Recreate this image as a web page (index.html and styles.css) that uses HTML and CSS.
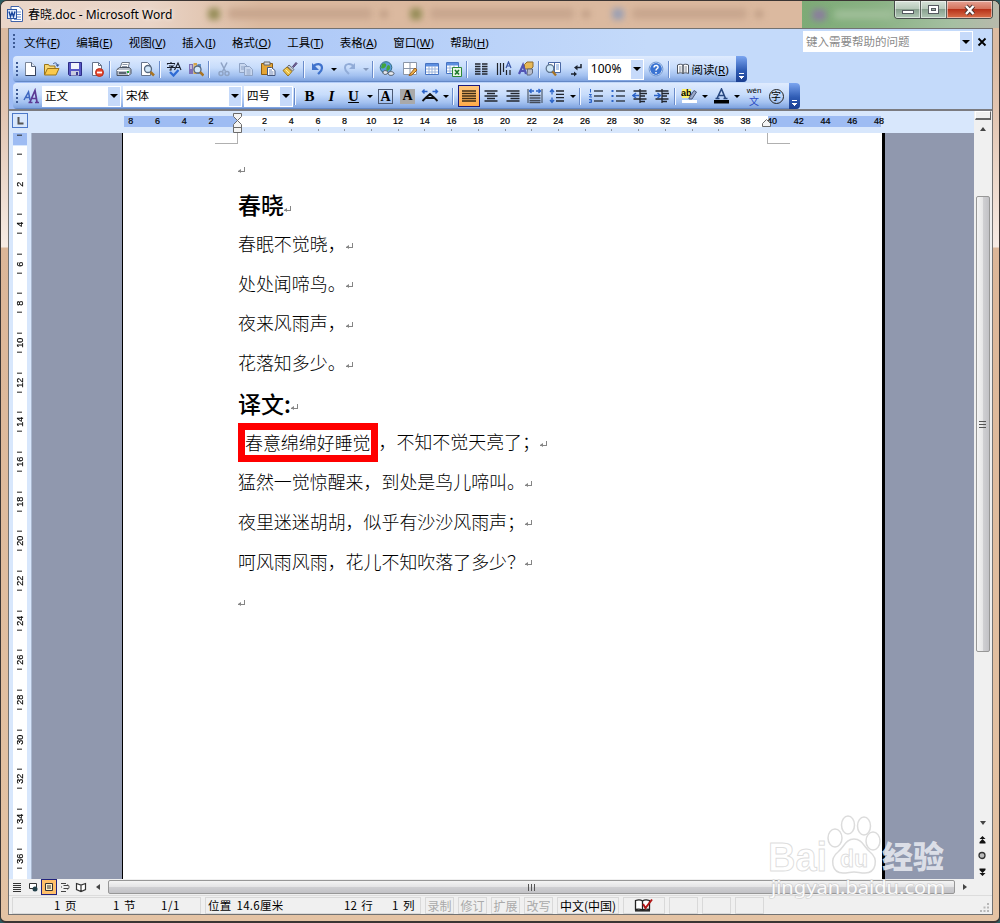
FILE: index.html
```html
<!DOCTYPE html>
<html lang="zh-CN">
<head>
    <meta charset="UTF-8">
    <title>春晓.doc - Microsoft Word</title>
    <link rel="stylesheet" href="styles.css">
</head>
<body>
<div class="window">
    <div class="titlebar">
        <svg class="app-icon" width="16" height="16" viewBox="0 0 16 16"><path d="M4 .5h8l3.500 3.500v11.500H4z" fill="#fff" stroke="#3f62a8"/><path d="M10 6h4M10 8.500h4M10 11h4M7 13.500h7" stroke="#6c8fcf"/><rect x=".5" y="3.500" width="9" height="9" fill="#dce8fb" stroke="#2d56a5"/><path d="M2 5.500l1.500 5L5 6.500l1.500 4L8 5.500" fill="none" stroke="#17449c" stroke-width="1.400"/></svg>
        <span class="caption">春晓.doc - Microsoft Word</span>
        <div class="ghosts">
            <i class="ghost g-leaf"></i><i class="ghost g-text"></i><i class="ghost g-x"></i>
            <i class="ghost g-leaf"></i><i class="ghost g-text"></i><i class="ghost g-x"></i>
            <i class="ghost g-paw"></i><i class="ghost g-text g-short"></i><i class="ghost g-x"></i>
        </div>
        <div class="ghost-green"><i class="ghost g-purple"></i><i class="ghost g-pale"></i></div>
        <div class="controls">
            <span class="ctl"><svg width="14" height="12"><rect x="1.500" y="6.500" width="11" height="3" fill="#fff" stroke="#555a60"/></svg></span>
            <span class="ctl"><svg width="14" height="12"><rect x="1.500" y="1.500" width="10" height="8" fill="#fff" stroke="#555a60"/><rect x="4.500" y="4.500" width="4" height="2" fill="#9eb3a5" stroke="#555a60"/></svg></span>
            <span class="ctl close"><svg width="14" height="12"><path d="M3 2l7.500 8M10.500 2L3 10" stroke="#4b3532" stroke-width="4.200"/><path d="M3 2l7.500 8M10.500 2L3 10" stroke="#fff" stroke-width="2.400"/></svg></span>
        </div>
    </div>

    <div class="client">
        <div class="menubar">
            <i class="grip"></i>
            <span>文件(<u>F</u>)</span><span>编辑(<u>E</u>)</span><span>视图(<u>V</u>)</span><span>插入(<u>I</u>)</span><span>格式(<u>O</u>)</span><span>工具(<u>T</u>)</span><span>表格(<u>A</u>)</span><span>窗口(<u>W</u>)</span><span>帮助(<u>H</u>)</span>
            <div class="ask"><span>键入需要帮助的问题</span><i class="drop"></i></div>
            <svg class="menu-close" width="10" height="10"><path d="M1.500 1.500l7 7M8.500 1.500l-7 7" stroke="#000" stroke-width="1.800"/></svg>
        </div>

        <!-- standard toolbar -->
        <div class="toolrow">
            <div class="toolbar">
                <i class="grip"></i>
                <b class="btn"><svg width="16" height="16"><path d="M3.500 1.500h6l4 4v9h-10z" fill="#fff" stroke="#7a8699"/><path d="M13.500 6v8.500H3.500" fill="none" stroke="#33405c"/><path d="M9.500 1.500v4h4" fill="#dfe7f3" stroke="#56637c"/></svg></b>
                <b class="btn"><svg width="16" height="16"><path d="M.5 13.500v-10h4l1 1.500h5.500v3" fill="#f7d774" stroke="#9b7418"/><path d="M.5 14l3-6.500H15l-3 6.500z" fill="#fbc94b" stroke="#9b7418"/><path d="M9 3c2-2 4-1 4.500 1" fill="none" stroke="#3c5a94"/><path d="M11.500 3.500h4L13.500 6z" fill="#3c5a94"/></svg></b>
                <b class="btn"><svg width="16" height="16"><path d="M1.500 1.500h13v13h-12l-1-1z" fill="#5757c4" stroke="#2d2d85"/><path d="M4 2h8v6H4z" fill="#f2f4fb"/><path d="M4 10h8v4.500H4z" fill="#c9cce0"/><path d="M9 11h2v3H9z" fill="#3a3a90"/></svg></b>
                <b class="btn"><svg width="16" height="16"><path d="M3.500 1.500h6l3 3v10h-9z" fill="#fff" stroke="#66738a"/><path d="M9.500 1.500v3h3" fill="none" stroke="#66738a"/><circle cx="10.500" cy="11.500" r="4" fill="#e4432b" stroke="#b7311c"/><path d="M8 11.500h5" stroke="#fff" stroke-width="1.800"/></svg></b>
                <i class="sep"></i>
                <b class="btn"><svg width="16" height="16"><path d="M4 7L6 1.500h7.500L12 7" fill="#fff" stroke="#6e7887"/><path d="M6.500 3.500h5M6 5.500h5" stroke="#8c97a8"/><path d="M1 8.500L3.500 6.500h10l1.500 2v4l-2 2H1z" fill="#b8bfca" stroke="#4a5260"/><path d="M1 9.500h11.500v4.500" fill="none" stroke="#fff"/><path d="M3 12h7" stroke="#3d4654" stroke-width="1.500"/><path d="M11 11h2" stroke="#22a83a" stroke-width="2"/></svg></b>
                <b class="btn"><svg width="16" height="16"><path d="M2.500 1.500h6l3 3v10h-9z" fill="#fff" stroke="#66738a"/><circle cx="9" cy="8" r="3.500" fill="#d3e8fa" stroke="#56677f" stroke-width="1.300"/><path d="M11.500 11l3.500 3.500" stroke="#a87424" stroke-width="2.500"/></svg></b>
                <i class="sep"></i>
                <b class="btn"><svg width="16" height="16"><path d="M1.500 3.500v-1h7v1M3 5h4L5 6.500V9H3.500M1 6.500h8M5 1v1.500M8.500 9L12 2l3 7M10 6.500h4" fill="none" stroke="#151b28" stroke-width="1.100"/><path d="M4 11l3.500 3.500L12.500 9" fill="none" stroke="#2f6bd4" stroke-width="2.300"/></svg></b>
                <b class="btn"><svg width="16" height="16"><path d="M1 3h4v10H1z" fill="#7d70b6"/><path d="M5.500 2h3.500v11H5.500z" fill="#d6a548"/><path d="M9.500 3H13v10H9.500z" fill="#608fca"/><path d="M2 5h2M6.500 5h2M2 7h2" stroke="#fff"/><circle cx="9.500" cy="8.500" r="3.500" fill="#d3e8fa" stroke="#56677f" stroke-width="1.300"/><path d="M12 11l3.500 3.500" stroke="#a87424" stroke-width="2.500"/></svg></b>
                <i class="sep"></i>
                <b class="btn"><svg width="16" height="16" fill="none" stroke="#8fa3c4" stroke-width="1.500"><path d="M5 1.500l4.500 9M11 1.500l-4.500 9"/><circle cx="5" cy="12.500" r="2"/><circle cx="11" cy="12.500" r="2"/></svg></b>
                <b class="btn"><svg width="16" height="16" fill="#c8d7ef" stroke="#8fa3c4"><path d="M1.500 2.500h5l3 3v6h-8z"/><path d="M6.500 5.500h5l3 3v6h-8z"/><path d="M8.500 9h4M8.500 11h4M8.500 13h4M3 6h3M3 8h3"/></svg></b>
                <b class="btn"><svg width="16" height="16"><path d="M1.500 2.500h11v11h-11z" fill="#e5a534" stroke="#8c5e15"/><path d="M4 1h6v3H4z" fill="#d7dbe2" stroke="#666"/><path d="M7.500 6.500h4l3.500 3v5H7.500z" fill="#fff" stroke="#44567c"/><path d="M9 9h3M9 11h4.500M9 13h4.500" stroke="#6d85b6"/></svg></b>
                <b class="btn"><svg width="16" height="16"><path d="M10.500 5.500L14 1.500l1 1-3.500 4z" fill="#7b5fa0" stroke="#4f4772"/><path d="M7 4l5 4.500-1.500 1.500L5.500 5.500z" fill="#c9ced8" stroke="#6a6f7a"/><path d="M5 6L10 10.500 6 15 1 9.500z" fill="#ecc14a" stroke="#9a7418"/><path d="M3.500 8.500l4 4" stroke="#fff2a8"/></svg></b>
                <i class="sep"></i>
                <b class="btn"><svg width="16" height="16"><path d="M3 6c3-4 9-4 9 1 0 3-2 4-4 6" fill="none" stroke="#3f72cc" stroke-width="2.200"/><path d="M2 2v7h7z" fill="#3f72cc"/></svg></b>
                <i class="arr"></i>
                <b class="btn"><svg width="16" height="16"><path d="M12 6c-3-4-9-4-9 1 0 3 2 4 4 6" fill="none" stroke="#91acd8" stroke-width="2"/><path d="M13 2v6H7z" fill="#91acd8"/></svg></b>
                <i class="arr dim"></i>
                <i class="sep"></i>
                <b class="btn"><svg width="16" height="16"><circle cx="7" cy="6.500" r="5.800" fill="#5b9adb" stroke="#2f6d83"/><path d="M3 3c3-2 5 0 4 2s-3 3-5 2zM9 4c3 0 3 5-1 6-1-1-1-4 1-6" fill="#42a53d"/><path d="M4 11.500c0-3 5-2 5 0s-5 3-5 0zM9 12.500c1-3 6-2 6 0s-5 3-6 0z" fill="#e5e8ee" stroke="#4b5561"/></svg></b>
                <b class="btn"><svg width="16" height="16"><path d="M1.500 1.500h13v12h-13zM8 1.500v12M1.500 7.500h13" fill="#fff" stroke="#8b96a8"/><path d="M8 13l5-6 2 2-5 5-3 .5z" fill="#eab04c" stroke="#9c5e1d"/></svg></b>
                <b class="btn"><svg width="16" height="16"><path d="M1.500 2.500h13v11h-13z" fill="#fff" stroke="#4774c2"/><path d="M2 3h12v2.500H2z" fill="#5c8fe0"/><path d="M2 8h12M2 11h12M5 5v8M8 5v8M11 5v8" stroke="#9bb4dc"/></svg></b>
                <b class="btn"><svg width="16" height="16"><path d="M.5 1.500h12v11H.5z" fill="#fff" stroke="#4774c2"/><path d="M1 2h11v2.500H1z" fill="#5c8fe0"/><path d="M1 7h11M1 10h11M4 4v8M8 4v8" stroke="#9bb4dc"/><path d="M6.500 6.500h9v9h-9z" fill="#e9f6e6" stroke="#2e8937"/><path d="M9 9l4 4.500M13 9l-4 4.500" stroke="#1c7a2b" stroke-width="1.700"/></svg></b>
                <i class="sep"></i>
                <b class="btn"><svg width="16" height="16"><path d="M2 3h5.500M2 5.500h5.500M2 8h5.500M2 10.500h5.500M2 13h5.500M9 3h5.500M9 5.500h5.500M9 8h5.500M9 10.500h5.500M9 13h5.500" stroke="#22262e" stroke-width="1.400"/></svg></b>
                <b class="btn"><svg width="16" height="16"><path d="M1.500 2v12M4.500 2v12M7.500 2v9" stroke="#20242c" stroke-width="1.200"/><path d="M10 7l2.500-6L15 7M11 5h3" stroke="#3a56a6" stroke-width="1.200" fill="none"/><path d="M10.500 9v5M14 9v5" stroke="#20242c" stroke-width="1.200"/></svg></b>
                <b class="btn"><svg width="16" height="16"><path d="M6.500 3.500L9 1h6v5l-2 2H6.500z" fill="#e7b857" stroke="#8f6a2a"/><path d="M9.500 8h5v4l-2 2H9z" fill="#b7bcc9" stroke="#616879"/><path d="M1 13L5 4l3 9M2.500 10h4.500" fill="none" stroke="#5154b4" stroke-width="2.200"/></svg></b>
                <i class="sep"></i>
                <b class="btn"><svg width="16" height="16"><path d="M3.500 1.500h12v10h-12z" fill="#fff" stroke="#4a68a4"/><path d="M9.500 2v9" stroke="#4a68a4"/><path d="M11 4h3M11 6h3M11 8h3" stroke="#6a97d6"/><circle cx="5" cy="7.500" r="3.800" fill="#cde6f8" stroke="#60768f" stroke-width="1.300"/><path d="M7.500 10.500l3.500 4" stroke="#a87424" stroke-width="2.300"/></svg></b>
                <b class="btn"><svg width="16" height="16"><path d="M13 3v3.500H8M7 13H3" stroke="#1d2430" stroke-width="1.500" fill="none"/><path d="M9.500 4v5.500L6 6.500zM6 10.500v5l3-2.500z" fill="#1d2430"/></svg></b>
                <div class="combo c-zoom"><span>100%</span><i class="drop"></i></div>
                <b class="btn"><svg width="16" height="16"><circle cx="8" cy="8" r="6.500" fill="#3a73d2" stroke="#e2ecfb" stroke-width="1.200"/><circle cx="8" cy="8" r="6.900" fill="none" stroke="#4779c2" stroke-width=".7"/><path d="M6 6.500c0-3 4.500-2.500 4 0-.3 1.300-2 1.300-2 3M8 11v1.500" stroke="#fff" stroke-width="1.500" fill="none"/></svg></b>
                <i class="sep"></i>
                <b class="btn read"><svg width="14" height="14"><path d="M1.500 3c2-1 4-1 5.500 0v8.500c-1.500-1-3.500-1-5.500 0zM12.500 3C10.500 2 8.500 2 7 3v8.500c1.500-1 3.500-1 5.500 0z" fill="#fff" stroke="#4b525e"/><path d="M3 5h2.500M3 7h2.500M3 9h2.500M8.500 5H11M8.500 7H11M8.500 9H11" stroke="#7d8797"/></svg><span>阅读(<u>R</u>)</span></b>
                <i class="cap"></i>
            </div>
        </div>

        <!-- formatting toolbar -->
        <div class="toolrow last">
            <div class="toolbar format">
                <i class="grip"></i>
                <b class="btn"><svg width="16" height="16"><path d="M1 12L5.500 4 7 12M3 9.500h4" stroke="#3d66c0" stroke-width="1.500" fill="none"/><path d="M7 14l5-11.500L14 14M8.500 10.500h5M5.500 14.500h4M12 14.500h4" stroke="#5c3a94" stroke-width="1.700" fill="none"/></svg></b>
                <div class="combo c-style"><span>正文</span><i class="drop"></i></div>
                <div class="combo c-font"><span>宋体</span><i class="drop"></i></div>
                <div class="combo c-size"><span>四号</span><i class="drop"></i></div>
                <i class="sep"></i>
                <b class="btn serif">B</b>
                <b class="btn serif italic">I</b>
                <b class="btn serif"><u>U</u></b>
                <i class="arr"></i>
                <b class="btn serif"><span class="boxed">A</span></b>
                <b class="btn serif"><span class="shaded">A</span></b>
                <b class="btn"><svg width="18" height="16"><path d="M1.500 13L5 9.500 9 6l4 3.500 3.500 3.500M4.500 10h9" fill="none" stroke="#111" stroke-width="1.800"/><path d="M1.500 3.500h5M11.500 3.500h5M3.500 1.500l-2 2 2 2M14.500 1.500l2 2-2 2" fill="none" stroke="#2b63c8" stroke-width="1.400"/></svg></b>
                <i class="arr"></i>
                <i class="sep thin"></i>
                <b class="btn on"><svg width="16" height="16"><path d="M1 3h14M1 5.500h14M1 8h14M1 10.500h14M1 13h14" stroke="#3e2d14" stroke-width="1.400"/></svg></b>
                <b class="btn"><svg width="16" height="16"><path d="M1.500 3h13M4 5.500h8M1.500 8h13M4 10.500h8M1.500 13h13" stroke="#22262e" stroke-width="1.400"/></svg></b>
                <b class="btn"><svg width="16" height="16"><path d="M1.500 3h13M5.500 5.500h9M1.500 8h13M5.500 10.500h9M1.500 13h13" stroke="#22262e" stroke-width="1.400"/></svg></b>
                <b class="btn"><svg width="16" height="16"><path d="M1 1v14M15 1v14" stroke="#39424f"/><path d="M2 3h5M9 3h5M4.500 1l-2 2 2 2M11.500 1l2 2-2 2" stroke="#2b63c8" stroke-width="1.300" fill="none"/><path d="M2.500 7.500h11M2.500 10h11M2.500 12.500h11M2.500 14.500h11" stroke="#444b57" stroke-width="1.300"/></svg></b>
                <b class="btn"><svg width="16" height="16"><path d="M3 2v4.500M3 9.500V14M1 4l2-2.500L5 4M1 12l2 2.500L5 12" stroke="#2b63c8" stroke-width="1.300" fill="none"/><path d="M7 3h8M7 6.300h8M7 9.600h8M7 13h8" stroke="#22262e" stroke-width="1.300"/></svg></b>
                <i class="arr"></i>
                <i class="sep wide"></i>
                <b class="btn"><svg width="16" height="16"><path d="M2.500 1v3.500M1 6.500h2.500L1.500 9H4M1 11.500h2.500v3H1M1.500 13H3" stroke="#2b63c8" fill="none"/><path d="M6 3h9M6 8h9M6 13h9" stroke="#39424f" stroke-width="1.300"/></svg></b>
                <b class="btn"><svg width="16" height="16"><path d="M1.500 3h2M1.500 8h2M1.500 13h2" stroke="#2b63c8" stroke-width="2"/><path d="M6 3h9M6 8h9M6 13h9" stroke="#39424f" stroke-width="1.300"/></svg></b>
                <b class="btn"><svg width="16" height="16"><path d="M1.500 3h13M8 5.500h7M8 8h5M1.500 11h13M8 13.500h5M8 1v14" stroke="#22262e" stroke-width="1.300"/><path d="M1 7.500h6M4 5L1 7.500 4 10" stroke="#2b63c8" stroke-width="1.500" fill="none"/></svg></b>
                <b class="btn"><svg width="16" height="16"><path d="M1.500 3h13M8 5.500h7M8 8h5M1.500 11h13M8 13.500h5M8 1v14" stroke="#22262e" stroke-width="1.300"/><path d="M0 7.500h6M3.500 5l3 2.500-3 2.500" stroke="#2b63c8" stroke-width="1.500" fill="none"/></svg></b>
                <i class="sep"></i>
                <b class="btn"><svg width="17" height="17"><path d="M1 1h9v9H1z" fill="#fff36a"/><text x="0" y="8" class="ab">ab</text><path d="M8 10l5-7.500 2.500 1.500-4.500 7H8z" fill="#9aa9c9" stroke="#46587c"/><path d="M1 12h15v3H1z" fill="#fff"/></svg></b>
                <i class="arr"></i>
                <b class="btn"><svg width="17" height="17"><path d="M4 10.500L8.500 1l4 9.500M5.500 7.500H11M2.500 10.500h4M10.500 10.500h4" fill="none" stroke="#27477f" stroke-width="1.600"/><path d="M1 12h15v3.500H1z" fill="#000"/></svg></b>
                <i class="arr"></i>
                <b class="btn wen"><span>wén</span><em>文</em></b>
                <b class="btn"><span class="ring">字</span></b>
                <i class="cap"></i>
            </div>
        </div>

        <div class="work">
            <div class="main">
                <div class="hruler">
                    <div class="tabbox"><svg width="14" height="13"><path d="M5.500 3v6.500h5" fill="none" stroke="#555" stroke-width="2"/></svg></div>
                    <div class="hscale">
                        <span>8</span><span>6</span><span>4</span><span>2</span><span></span><span>2</span><span>4</span><span>6</span><span>8</span><span>10</span><span>12</span><span>14</span><span>16</span><span>18</span><span>20</span><span>22</span><span>24</span><span>26</span><span>28</span><span>30</span><span>32</span><span>34</span><span>36</span><span>38</span><span>40</span><span>42</span><span>44</span><span>46</span><span>48</span>
                    </div>
                    <svg class="indent left" width="11" height="22"><path d="M1.500 1.500h8v3L5.500 8.500l-4-4zM1.500 15.500v-3L5.500 8.500l4 4v3zM1.500 15.500h8v5h-8z" fill="#f4f4f4" stroke="#6b6b6b"/></svg>
                    <svg class="indent right" width="11" height="10"><path d="M1.500 8.500v-3L5.500 1.500l4 4v3z" fill="#f4f4f4" stroke="#6b6b6b"/></svg>
                </div>
                <div class="stage">
                    <div class="vruler">
                        <div class="vscale">
                            <span></span><span>2</span><span>4</span><span>6</span><span>8</span><span>10</span><span>12</span><span>14</span><span>16</span><span>18</span><span>20</span><span>22</span><span>24</span><span>26</span><span>28</span><span>30</span><span>32</span><span>34</span><span>36</span>
                        </div>
                    </div>
                    <div class="desk">
                        <div class="page">
                            <i class="crop crop-l"></i><i class="crop crop-r"></i>
                            <p class="first"><i class="ret"></i></p>
                            <h2>春晓<i class="ret"></i></h2>
                            <p>春眠不觉晓，<i class="ret"></i></p>
                            <p>处处闻啼鸟。<i class="ret"></i></p>
                            <p>夜来风雨声，<i class="ret"></i></p>
                            <p>花落知多少。<i class="ret"></i></p>
                            <h2>译文:<i class="ret"></i></h2>
                            <p><span class="marked">春意绵绵好睡觉</span>，不知不觉天亮了；<i class="ret"></i></p>
                            <p>猛然一觉惊醒来，到处是鸟儿啼叫。<i class="ret"></i></p>
                            <p>夜里迷迷胡胡，似乎有沙沙风雨声；<i class="ret"></i></p>
                            <p>呵风雨风雨，花儿不知吹落了多少？<i class="ret"></i></p>
                            <p><i class="ret"></i></p>
                        </div>
                    </div>
                </div>
                <div class="hbar">
                    <b class="view"><svg width="12" height="12"><path d="M2 2.500h8M2 4.500h8M2 6.500h8M2 8.500h8M2 10.500h8" stroke="#333"/></svg></b>
                    <b class="view"><svg width="12" height="12"><path d="M2.500 2.500h7v5h-7z" fill="#fff" stroke="#333"/><circle cx="8" cy="8" r="2.500" fill="#23404a"/></svg></b>
                    <b class="view on"><svg width="12" height="12"><path d="M2.500 2.500h7v7h-7z" fill="#fff0c8" stroke="#333"/><path d="M4 5h4M4 7h4" stroke="#333"/></svg></b>
                    <b class="view"><svg width="12" height="12"><path d="M2 2.500h5M4.500 4.500H9M4.500 7.500H9M2 10.500h5M2 6h1" stroke="#444"/><path d="M8.500 3.500c2 1 2 4 0 5" fill="none" stroke="#444"/></svg></b>
                    <b class="view"><svg width="12" height="12"><path d="M1.500 2.500L6 4l4.500-1.500v6L6 10.500l-4.500-2zM6 4v6" fill="#fff" stroke="#333" stroke-width="1.200"/></svg></b>
                    <b class="arrow-l"></b>
                    <div class="hthumb"><i></i><i></i><i></i></div>
                    <b class="arrow-r"></b>
                </div>
            </div>
            <div class="vbar">
                <i class="split"></i>
                <i class="arrow-u"></i>
                <div class="vthumb"><i></i><i></i><i></i></div>
                <i class="arrow-d"></i>
                <svg width="16" height="57" viewBox="0 6 16 57"><path d="M7.500 11L4.500 14h6zM7.500 14l-3 3h6zM4.500 17h6v1.500h-6z" fill="#111"/><circle cx="7" cy="30.500" r="3" fill="#bbb" stroke="#333" stroke-width="1.300"/><path d="M4.500 43.500h6V45h-6zM4.500 45h6l-3 3zM4.500 48h6l-3 3z" fill="#111"/></svg>
            </div>
        </div>

        <div class="status">
            <div class="cell s-page"><span>1 页</span><span>1 节</span><span>1/1</span></div>
            <div class="cell s-pos"><span>位置 14.6厘米</span><span>12 行</span><span>1 列</span></div>
            <div class="cell off">录制</div>
            <div class="cell off">修订</div>
            <div class="cell off">扩展</div>
            <div class="cell off">改写</div>
            <div class="cell s-lang">中文(中国)</div>
            <div class="cell s-spell"><svg width="20" height="14"><path d="M1.500 2.500c3-1 5-1 7 .5 2-1.500 4-1.500 7-.5v9c-3-.5-5-.5-7 .5-2-1-4-1-7-.5zM8.500 3v9" fill="#fff" stroke="#222" stroke-width="1.300"/><path d="M1 12.800h15" stroke="#222" stroke-width="1.500"/><path d="M9 6l2.500 4L18 1.500" fill="none" stroke="#b01515" stroke-width="2"/></svg></div>
            <div class="cell s-blank"></div>
            <div class="cell s-blank"></div>
            <div class="cell s-blank"></div>
            <svg class="resize" width="10" height="10" fill="#b8b8b8"><path d="M7 0h2v2H7zM7 3.500h2v2H7zM3.500 3.500h2v2h-2zM7 7h2v2H7zM3.500 7h2v2h-2zM0 7h2v2H0z"/></svg>
        </div>
    </div>
</div>

<svg class="watermark" width="190" height="104" viewBox="0 0 190 104">
    <g class="wm-shape">
        <ellipse cx="68" cy="31" rx="7" ry="9"/>
        <ellipse cx="81" cy="18" rx="6.500" ry="9"/>
        <ellipse cx="97" cy="19" rx="6.500" ry="9"/>
        <ellipse cx="106" cy="34" rx="7" ry="9"/>
        <path d="M87 32c-8 0-10 8-16 13-9 7-6 21 5 21 5 0 7-1 11-1s6 1 11 1c11 0 14-14 5-21-6-5-8-13-16-13z"/>
    </g>
    <text x="1" y="64" class="wm-big" textLength="59" lengthAdjust="spacingAndGlyphs">Bai</text>
    <text x="73" y="60" class="wm-du" textLength="28" lengthAdjust="spacingAndGlyphs">du</text>
    <text x="115" y="61" class="wm-cn">经验</text>
    <text x="4" y="87" class="wm-url" textLength="174" lengthAdjust="spacingAndGlyphs">jingyan.baidu.com</text>
</svg>
</body>
</html>
```
FILE: styles.css
```css
* {
    box-sizing: border-box;
}

body {
    margin: 0;
    background: #2b5b60;
    font-family: "Noto Sans", "Noto Sans CJK SC", sans-serif;
    font-size: 12px;
    color: #000;
    overflow: hidden;
}

svg {
    display: block;
    flex: none;
}

/* window frame */
.window {
    width: 1000px;
    height: 923px;
    display: flex;
    flex-direction: column;
    padding: 0 6px 6px 7px;
    border: 1px solid #3b3533;
    border-bottom-width: 2px;
    border-radius: 7px 7px 6px 6px;
    background: linear-gradient(180deg, #dcbba1 0, #dcbba1 50px, #e2c5b1 110px, #f7ebe4 246px, #dcb698 247px, #e4c3a4 100%);
}

.titlebar {
    height: 27px;
    flex: none;
    display: flex;
    align-items: center;
    position: relative;
    margin: 0 -6px 0 -7px;
    padding: 0 0 2px 6px;
    border-radius: 6px 6px 0 0;
    background: linear-gradient(90deg, #ead6c9 0, #e9d4c6 150px, #dbb99f 260px, #dbb99f 100%);
}

.caption {
    width: 180px;
    margin-left: 5px;
    font-size: 12px;
    white-space: nowrap;
    text-shadow: 0 0 5px #fff;
}

.ghosts {
    display: flex;
    align-items: center;
    gap: 8px;
}

.ghost {
    height: 12px;
    border-radius: 4px;
    filter: blur(3px);
}

.g-leaf { width: 12px; background: #958d58; }
.g-paw { width: 12px; background: #9ba0b4; }
.g-text { width: 144px; height: 11px; background: #c8a68e; }
.g-short { width: 115px; }
.g-x { width: 8px; height: 8px; margin-right: 14px; background: #bd9b83; }

.ghost-green {
    position: absolute;
    left: 801px;
    right: 0;
    top: 0;
    bottom: 0;
    display: flex;
    align-items: center;
    gap: 8px;
    padding-left: 10px;
    border-radius: 0 6px 0 0;
    background: linear-gradient(90deg, #7dab76 0, #8ab284 75px, #a5bfa2 150px, #b8b9ac 100%);
}

.g-purple { width: 14px; background: #8a7f9c; }
.g-pale { width: 60px; height: 9px; background: #9fbe98; }

.controls {
    position: absolute;
    top: 0;
    right: 6px;
    display: flex;
    height: 18px;
    border: 1px solid #474d4b;
    border-top: 0;
    border-radius: 0 0 4px 4px;
    overflow: hidden;
}

.ctl {
    width: 26px;
    display: flex;
    align-items: center;
    justify-content: center;
    border-right: 1px solid #59605c;
    background: linear-gradient(#d8e3d9, #b5c8b8 48%, #89a18f 50%, #b0c7b5);
    box-shadow: inset 0 0 0 1px rgba(255, 255, 255, .5);
}

.close {
    width: 45px;
    border-right: 0;
    background: linear-gradient(#e5a294, #d4735c 46%, #b7321a 50%, #d9704a);
}

.client {
    flex: 1;
    min-height: 0;
    display: flex;
    flex-direction: column;
    border: 1px solid #727272;
    background: linear-gradient(90deg, #9ebcf5, #c4dafa 65%);
}

/* menu */
.menubar {
    height: 27px;
    flex: none;
    display: flex;
    align-items: center;
    padding: 0 5px 2px 4px;
}

.menubar > span {
    margin-right: 16.300px;
    white-space: nowrap;
    font-size: 11.500px;
}

.grip {
    width: 3px;
    height: 15px;
    flex: none;
    background: repeating-linear-gradient(180deg, #3d5a94 0 2px, transparent 2px 4px);
}

.menubar .grip {
    width: 2px;
    margin-right: 9px;
}

.ask,
.combo {
    display: flex;
    align-items: center;
    height: 21px;
    flex: none;
    background: #fff;
}

.ask {
    width: 170px;
    margin-left: auto;
    color: #8a8a8a;
}

.ask span,
.combo span {
    flex: 1;
    padding-left: 3px;
    font-size: 11.500px;
    line-height: 17px;
    white-space: nowrap;
}

.combo span {
    padding-bottom: 2px;
}

.drop {
    width: 12px;
    height: 19px;
    margin-right: 1px;
    display: flex;
    align-items: center;
    justify-content: center;
    background: #c6dafa;
}

.drop::after,
.arr::after {
    content: "";
    border: 4px solid transparent;
    border-top-color: #000;
    border-bottom: 0;
}

.menu-close {
    margin-left: 4px;
}

/* toolbars */
.toolrow {
    height: 27px;
    flex: none;
    padding-left: 4px;
    display: flex;
    align-items: flex-start;
}

.last {
    height: 26px;
}

.toolbar {
    height: 26px;
    display: flex;
    align-items: center;
    padding-left: 3px;
    border-radius: 4px;
    background: linear-gradient(180deg, #dfebfe 0, #c7dcfb 45%, #a3c1f0 75%, #7fa3df 96%, #4b6fae 100%);
}

.toolbar .grip {
    width: 2px;
    margin-right: 1px;
}

.format .grip {
    margin-right: 2px;
}

.btn {
    width: 22.300px;
    height: 22px;
    flex: none;
    display: flex;
    align-items: center;
    justify-content: center;
    font-weight: normal;
}

.format .btn {
    width: 22px;
}

.format .on {
    border: 1px solid #1b1b7c;
    background: linear-gradient(#ffc77b, #ffab4a);
}

.sep {
    width: 5px;
    height: 17px;
    flex: none;
    background: linear-gradient(90deg, transparent 1px, #6a8ccb 1px 2px, #f2f7ff 2px 3px, transparent 3px);
}

.arr {
    width: 10px;
    height: 20px;
    flex: none;
    display: flex;
    align-items: center;
    justify-content: center;
}

.arr::after {
    border-width: 3px 3px 0;
}

.dim::after {
    border-top-color: #8499bd;
}

.read {
    width: 64px;
    gap: 2px;
    padding-right: 4px;
}

.read span {
    font-size: 11.500px;
    white-space: nowrap;
}

.cap {
    width: 11px;
    height: 26px;
    flex: none;
    border-radius: 0 4px 4px 0;
    display: flex;
    align-items: flex-end;
    justify-content: center;
    padding-bottom: 3px;
    background: linear-gradient(#7ba5f0, #2f5cb4 55%, #1b3f91);
}

.cap::after {
    content: "";
    width: 5px;
    height: 6px;
    background: linear-gradient(#fff, #fff) 0 0 / 5px 1px no-repeat,
        linear-gradient(#fff, #fff) 0 3px / 5px 1px no-repeat,
        linear-gradient(#fff, #fff) 1px 4px / 3px 1px no-repeat,
        linear-gradient(#fff, #fff) 2px 5px / 1px 1px no-repeat;
}

.c-zoom { width: 56px; margin: 0 1px; }
.c-zoom span { font-size: 12px; }
.c-style { width: 79px; }
.c-font { width: 119px; margin: 0 2px; }
.c-size { width: 49px; }

.format .sep {
    width: 4.500px;
    margin-right: 1px;
}

.format .thin,
.format .wide {
    width: 6px;
}

.serif {
    font-family: "Liberation Serif", serif;
    font-size: 15px;
    font-weight: bold;
}

.italic {
    font-style: italic;
}

.boxed,
.shaded {
    width: 15px;
    height: 15px;
    line-height: 14px;
    text-align: center;
    font-size: 14px;
}

.boxed {
    border: 1px solid #4a5873;
    line-height: 13px;
}

.shaded {
    background: #a9a9a9;
}

.ab {
    font: bold 9px "Liberation Sans", sans-serif;
}

.format .wen {
    flex-direction: column;
    width: 22px;
    margin-left: 1px;
}

.wen span {
    font-family: "Liberation Sans", sans-serif;
    font-size: 8px;
    line-height: 9px;
}

.wen em {
    font-family: "Noto Sans CJK SC", sans-serif;
    font-style: normal;
    font-size: 10px;
    line-height: 11px;
    color: #2b4bc4;
}

.ring {
    width: 15px;
    height: 15px;
    border: 1px solid #222;
    border-radius: 50%;
    font-size: 10px;
    line-height: 12px;
    text-align: center;
}

.format .cap {
    margin-left: 2px;
}

/* document area */
.work {
    flex: 1;
    min-height: 0;
    display: flex;
    border-top: 2px solid #7b7b80;
    background: #f0f0f0;
}

.main {
    width: 965px;
    display: flex;
    flex-direction: column;
    min-height: 0;
}

.hruler {
    position: relative;
    height: 22px;
    flex: none;
    display: flex;
    background: #d8e7fc;
}

.tabbox {
    width: 16px;
    height: 15px;
    margin: 2px 0 0 3px;
    border: 1px solid #4c78c8;
}

.hscale {
    display: flex;
    width: 760px;
    height: 11px;
    margin: 5px 0 0 96px;
    background: linear-gradient(90deg, #9ebcf3 113px, #fff 113px 644px, #9ebcf3 644px 757px, transparent 757px);
    font: 9px/10px "Liberation Sans", sans-serif;
}

.hscale span {
    position: relative;
    width: 26.720px;
    flex: none;
    text-align: center;
    -webkit-text-stroke: .2px #000;
}

.hscale span:first-child {
    margin-left: -6.500px;
}

/* tick under every number inside the text column */
.hscale span:nth-child(n+6):nth-child(-n+24)::after {
    content: "";
    position: absolute;
    left: 13px;
    top: 13px;
    width: 1px;
    height: 2px;
    background: #8d949f;
}

.indent {
    position: absolute;
}

.left { left: 223px; top: 1px; }
.right { left: 752px; top: 7px; }

.stage {
    flex: 1;
    min-height: 0;
    display: flex;
}

.vruler {
    width: 23px;
    flex: none;
    padding-left: 4px;
    overflow: hidden;
    background: #d8e7fc;
    border-right: 1px solid #aab8cf;
}

.vscale {
    width: 14px;
    height: 100%;
    display: flex;
    flex-direction: column;
    background: linear-gradient(180deg, #9ebcf3 12px, #d8e7fc 12px 13px, #fff 13px);
}

.vscale span {
    position: relative;
    height: 39.680px;
    flex: none;
    writing-mode: vertical-rl;
    transform: rotate(180deg);
    text-align: center;
    font: 9px/14px "Liberation Sans", sans-serif;
    -webkit-text-stroke: .2px #000;
}

.vscale span:first-child {
    margin-top: -8.500px;
}

.vscale span::before,
.vscale span::after {
    content: "";
    position: absolute;
    left: 5px;
    width: 5px;
    height: 1px;
    background: #222;
}

.vscale span::before { top: 10px; }
.vscale span::after { top: 29px; }

.desk {
    flex: 1;
    padding-left: 90px;
    background: #9098ae;
}

.page {
    position: relative;
    width: 763px;
    height: 100%;
    padding: 16.500px 0 0 115px;
    border-left: 1px solid #000;
    border-right: 3px solid #000;
    background: #fff;
}

.crop {
    position: absolute;
    top: 0;
    width: 23px;
    height: 11px;
    border-bottom: 1px solid #b0b0b0;
}

.crop-l { left: 92px; border-right: 1px solid #b0b0b0; }
.crop-r { left: 644px; border-left: 1px solid #b0b0b0; }

.page p,
.page h2 {
    height: 39.700px;
    margin: 0;
    display: flex;
    align-items: center;
    white-space: nowrap;
    font-family: "Noto Sans CJK SC", sans-serif;
    font-size: 17.950px;
    font-weight: 300;
    color: #000;
}

.page p {
    padding-bottom: 2px;
}

.page h2 {
    font-size: 23px;
    font-weight: 500;
}

.page .first {
    height: 35px;
    padding-bottom: 0;
}

/* paragraph mark */
.ret {
    width: 7px;
    height: 5px;
    position: relative;
    top: 2px;
    border-right: 1px solid #858585;
    border-bottom: 1px solid #858585;
}

.ret::before {
    content: "";
    position: absolute;
    left: 0;
    top: 2px;
    border: 2.500px solid transparent;
    border-left: 0;
    border-right: 3px solid #858585;
}

h2 .ret {
    top: 4px;
}

.marked {
    position: relative;
    top: 1px;
    height: 39px;
    flex: none;
    margin-right: 1px;
    border: 7px solid #f00;
    line-height: 24px;
}

/* scrollbars */
.hbar {
    height: 16px;
    flex: none;
    display: flex;
    align-items: center;
    background: #f0f0f0;
}

.view {
    width: 16px;
    height: 16px;
    display: flex;
    align-items: center;
    justify-content: center;
}

.view.on {
    border: 1px solid #22227c;
    background: #ffc06a;
}

.arrow-l,
.arrow-r {
    width: 19px;
    height: 16px;
    display: flex;
    align-items: center;
    justify-content: center;
}

.arrow-l::after,
.arrow-r::after {
    content: "";
    border: 3.500px solid transparent;
}

.arrow-l::after { border-left: 0; border-right: 4px solid #444; }
.arrow-r::after { border-right: 0; border-left: 4px solid #444; }

.hthumb {
    width: 848px;
    height: 14px;
    display: flex;
    align-items: center;
    justify-content: center;
    gap: 2px;
    border: 1px solid #979797;
    border-radius: 2px;
    background: linear-gradient(#f4f4f4 0, #e4e4e5 48%, #cfcfd2 52%, #c2c2c6 100%);
}

.hthumb i {
    width: 1px;
    height: 7px;
    background: #555;
}

.vbar {
    width: 17px;
    display: flex;
    flex-direction: column;
    align-items: center;
    background: #f0f0f0;
}

.split {
    width: 16px;
    height: 9px;
    border: 1px solid #fff;
    border-right-color: #666;
    border-bottom: 2px solid #666;
    background: #f0f0f0;
}

.arrow-u,
.arrow-d {
    width: 16px;
    height: 17px;
    display: flex;
    align-items: center;
    justify-content: center;
}

.arrow-u::after,
.arrow-d::after {
    content: "";
    border: 3.500px solid transparent;
}

.arrow-u::after { border-top: 0; border-bottom: 4px solid #444; }
.arrow-d::after { border-bottom: 0; border-top: 4px solid #444; }

.vthumb {
    width: 14px;
    height: 456px;
    margin: 59px 0 162px;
    display: flex;
    flex-direction: column;
    align-items: center;
    justify-content: center;
    gap: 2px;
    border: 1px solid #979797;
    border-radius: 2px;
    background: linear-gradient(90deg, #f4f4f4 0, #e6e6e7 48%, #cfcfd2 52%, #c2c2c6 100%);
}

.vthumb i {
    width: 7px;
    height: 1px;
    background: #555;
}

/* status bar */
.status {
    height: 19px;
    flex: none;
    display: flex;
    align-items: center;
    padding-left: 3px;
    border-top: 1px solid #dcdcdc;
    background: #f0f0f0;
    font-family: "Noto Sans CJK SC", sans-serif;
    font-size: 11.500px;
}

.cell {
    width: 29px;
    height: 17px;
    margin-right: 4px;
    flex: none;
    display: flex;
    align-items: center;
    justify-content: center;
    border: 1px solid #d9d9d9;
    line-height: 15px;
    white-space: nowrap;
}

.off {
    color: #aaa;
    font-size: 12px;
}

.s-page {
    width: 189px;
    justify-content: flex-start;
    padding-left: 41px;
}

.s-page span { width: 59px; flex: none; word-spacing: 2px; }
.s-page span:nth-child(2) { width: 48px; }
.s-page span:nth-child(3) { letter-spacing: .5px; width: auto; }

.s-pos {
    width: 216px;
    justify-content: flex-start;
    padding-left: 2px;
}

.s-pos span { flex: none; word-spacing: 2px; }
.s-pos span:first-child { width: 136px; letter-spacing: .3px; }
.s-pos span:nth-child(2) { width: 48px; }

.s-lang { width: 62px; font-size: 12px; }
.s-spell { width: 42px; }

.resize {
    margin: 6px 2px 0 auto;
}

/* site mark in the corner */
.watermark {
    position: absolute;
    left: 767px;
    top: 807px;
}

.wm-shape {
    fill: #fff;
    fill-opacity: .8;
    stroke: #dcdcdc;
    stroke-width: 1.500;
}

.watermark text {
    fill: #fff;
    fill-opacity: .8;
    stroke: #cfcfcf;
    stroke-width: 1;
    stroke-opacity: .7;
}

.watermark .wm-cn {
    fill: #e6e9f0;
    fill-opacity: .9;
    stroke: none;
}

.watermark .wm-url {
    fill-opacity: .95;
    stroke: #bbb;
    stroke-width: 1.500;
    stroke-opacity: .5;
    paint-order: stroke;
}

.wm-big { font: bold 40px "Liberation Sans", sans-serif; }
.wm-du { font: bold 24px "Liberation Sans", sans-serif; }
.wm-cn { font: 900 31px "Noto Sans CJK SC", sans-serif; }
.wm-url { font: 18px "Noto Sans", sans-serif; }
```
